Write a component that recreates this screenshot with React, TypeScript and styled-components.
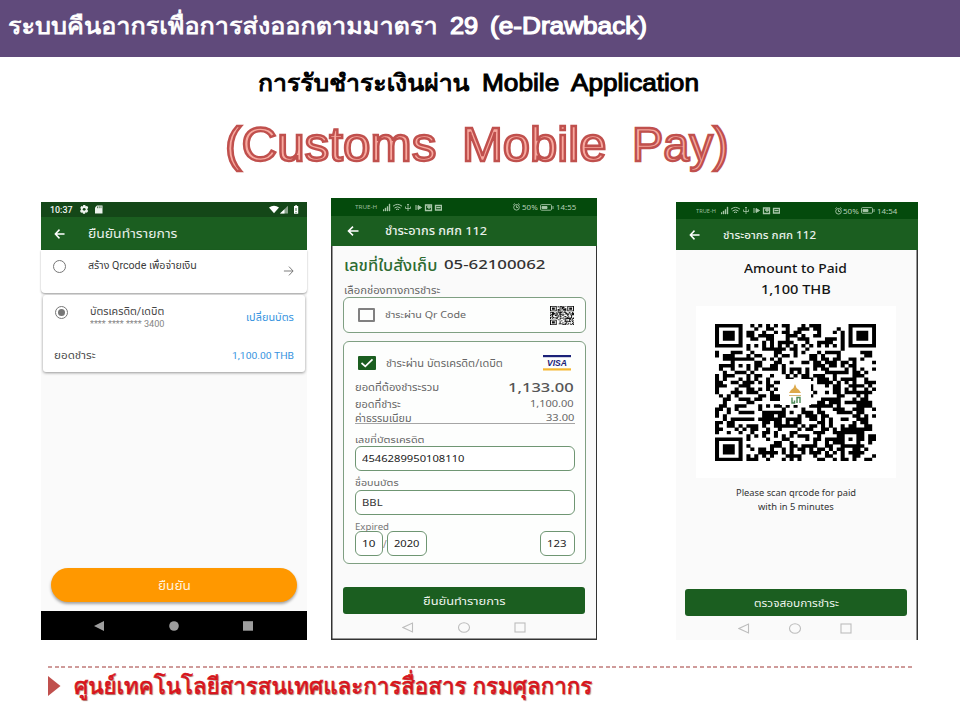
import React, { useLayoutEffect, useRef, useState } from "react";
import styled, { createGlobalStyle } from "styled-components";

const Global = createGlobalStyle`
  *, *::before, *::after { box-sizing: border-box; }
  body { margin: 0; background: #fff; }
  svg { display: block; flex: none; }
`;

const SANS = `"Liberation Sans", "Loma", "Garuda", "Noto Sans Thai", "Noto Sans", sans-serif`;
const APP = `"Noto Sans", "Noto Sans Thai", "Loma", sans-serif`;
const ROBOTO = `Roboto, "Noto Sans Thai", "Loma", sans-serif`;

/* ---------- text that keeps an exact measure ---------- */
interface LabelProps {
  w: number;
  size: number;
  color?: string;
  weight?: number;
  font?: string;
  drop?: number;
  stroke?: string;
  shadow?: string;
  children: React.ReactNode;
}
const Measure = styled.span<{ $w: number; $drop: number }>`
  display: block;
  flex: none;
  width: ${(p) => p.$w}px;
  height: 16px;
  white-space: pre;
  margin-top: ${(p) => p.$drop}px;
`;
const Glyphs = styled.span<{
  $size: number; $color: string; $weight: number; $font: string;
  $stroke?: string; $shadow?: string;
}>`
  display: block;
  width: max-content;
  transform-origin: 0 50%;
  font-family: ${(p) => p.$font};
  font-size: ${(p) => p.$size}px;
  font-weight: ${(p) => p.$weight};
  line-height: 16px;
  color: ${(p) => p.$color};
  -webkit-text-stroke: ${(p) => p.$stroke || "0"};
  text-shadow: ${(p) => p.$shadow || "none"};
`;
const Label = ({ w, size, color = "#555", weight = 400, font = APP, drop = 0, stroke, shadow, children }: LabelProps) => {
  const ref = useRef<HTMLSpanElement>(null);
  const [ratio, setRatio] = useState(1);
  useLayoutEffect(() => {
    if (ref.current) setRatio(w / ref.current.offsetWidth);
  }, [w, children]);
  return (
    <Measure $w={w} $drop={drop}>
      <Glyphs ref={ref} $size={size} $color={color} $weight={weight} $font={font} $stroke={stroke}
        $shadow={shadow} style={{ transform: `scaleX(${ratio})` }}>
        {children}
      </Glyphs>
    </Measure>
  );
};

/* ---------- slide ---------- */
const Slide = styled.main`
  width: 960px;
  height: 720px;
  background: #fff;
  overflow: hidden;
  display: flex;
  flex-direction: column;
`;
const Banner = styled.header`
  height: 57px;
  flex: none;
  background: #604a7b;
  padding: 18px 0 0 8px;
  display: flex;
  gap: 12px;
`;
const Headings = styled.section`
  height: 141px;
  flex: none;
  padding: 18px 0 0 225px;
`;
const Subtitle = styled.div`
  height: 62px;
  padding-left: 33px;
  display: flex;
  gap: 12px;
`;
const Title = styled.div`
  display: flex;
  gap: 26px;
`;
const Phones = styled.section`
  display: flex;
  align-items: flex-end;
  height: 442px;
  flex: none;
  padding-left: 41px;
`;
const Footer = styled.footer`
  margin: 26px 48px 0;
`;
const Dashes = styled.div`
  height: 1.5px;
  width: 864px;
  background: repeating-linear-gradient(90deg, #cf9b9a 0 4px, transparent 4px 6.72px);
`;
const FooterRow = styled.div`
  display: flex;
  padding-top: 8px;
  gap: 13px;
  align-items: flex-start;
`;

/* ---------- phone parts ---------- */
const Phone = styled.article<{ $w: number; $h: number; $ml?: number; $frame?: string }>`
  width: ${(p) => p.$w}px;
  height: ${(p) => p.$h}px;
  margin-left: ${(p) => p.$ml || 0}px;
  flex: none;
  background: #fafafa;
  display: flex;
  flex-direction: column;
  box-shadow: ${(p) => p.$frame || "none"};
`;
const StatusBar = styled.div<{ $h: number; $bg: string; $l: number; $r: number }>`
  height: ${(p) => p.$h}px;
  flex: none;
  background: ${(p) => p.$bg};
  padding: 0 ${(p) => p.$r}px 0 ${(p) => p.$l}px;
  display: flex;
  justify-content: space-between;
  align-items: center;
`;
const Cluster = styled.div<{ $gap: number }>`
  display: flex;
  align-items: center;
  gap: ${(p) => p.$gap}px;
`;
const AppBar = styled.div<{ $h: number; $l: number; $gap: number }>`
  height: ${(p) => p.$h}px;
  flex: none;
  background: #1b5e20;
  padding-left: ${(p) => p.$l}px;
  display: flex;
  align-items: center;
  gap: ${(p) => p.$gap}px;
`;
const Row = styled.div<{ $h: number; $l?: number; $r?: number; $gap?: number }>`
  display: flex;
  align-items: center;
  flex: none;
  height: ${(p) => p.$h}px;
  padding: 0 ${(p) => p.$r || 0}px 0 ${(p) => p.$l || 0}px;
  gap: ${(p) => p.$gap || 0}px;
`;
const Push = styled.div`
  margin-left: auto;
  display: flex;
`;
const OptionCard = styled.div`
  height: 43px;
  flex: none;
  background: #fff;
  border-radius: 0 0 4px 4px;
  box-shadow: 0 1px 2px rgba(0, 0, 0, 0.35);
  padding: 0 13px 0 12px;
  display: flex;
  gap: 22px;
`;
const PayCard = styled.div`
  height: 77px;
  flex: none;
  margin: 2px 2px 0;
  background: #fff;
  border-radius: 3px;
  box-shadow: 0 1px 3px rgba(0, 0, 0, 0.4);
`;
const Stack = styled.div<{ $pt?: number }>`
  padding-top: ${(p) => p.$pt || 0}px;
`;
const Ring = styled.div<{ $on?: boolean }>`
  width: 13px;
  height: 13px;
  flex: none;
  border-radius: 50%;
  border: 1.5px solid #777;
  background: ${(p) => (p.$on ? "#777" : "#fff")};
  background-clip: content-box;
  padding: 2px;
`;
const Pill = styled.div`
  width: 246px;
  height: 34px;
  margin: auto 0 9px 10px;
  flex: none;
  border-radius: 17px;
  background: #ff9800;
  box-shadow: 0 2px 3px rgba(0, 0, 0, 0.35);
  display: flex;
  align-items: center;
  justify-content: center;
`;
const BlackNav = styled.div`
  height: 29px;
  flex: none;
  background: #000;
  display: flex;
  align-items: center;
  padding-left: 53px;
`;
const Box = styled.div<{ $h: number }>`
  height: ${(p) => p.$h}px;
  width: 243px;
  margin-left: 12px;
  flex: none;
  border: 1px solid #7f9f82;
  border-radius: 6px;
  background: #fdfefd;
`;
const Check = styled.div`
  width: 17px;
  height: 14px;
  flex: none;
  border: 2px solid #808080;
  border-radius: 1px;
`;
const Rule = styled.div`
  height: 1px;
  width: 220px;
  margin-left: 11px;
  background: #a5a5a5;
`;
const Field = styled.div<{ $w: number }>`
  width: ${(p) => p.$w}px;
  height: 25px;
  flex: none;
  border: 1px solid #6f9673;
  border-radius: 6px;
  background: #fff;
  display: flex;
  align-items: center;
  padding-left: 6px;
`;
const FieldLine = styled.div`
  display: flex;
  margin-left: 11px;
  height: 25px;
`;
const Action = styled.div<{ $w: number; $l: number }>`
  width: ${(p) => p.$w}px;
  margin: auto 0 0 ${(p) => p.$l}px;
  height: 27px;
  flex: none;
  background: #1b5e20;
  border-radius: 3px;
  display: flex;
  align-items: center;
  justify-content: center;
`;
const Centered = styled.div<{ $h: number }>`
  height: ${(p) => p.$h}px;
  flex: none;
  display: flex;
  align-items: center;
  justify-content: center;
  padding-right: 3px;
`;
const QrPanel = styled.div`
  width: 200px;
  height: 172px;
  flex: none;
  margin: 6px 0 0 20px;
  background: #fff;
  padding: 18px 0 0 19px;
`;

/* ---------- drawings ---------- */
const buildQr = (n: number, seed: number): string => {
  let s = seed;
  const rand = () => {
    s = (s * 1664525 + 1013904223) % 4294967296;
    return s / 4294967296;
  };
  const finder = (x: number, y: number): boolean | null => {
    if (x < -1 || y < -1 || x > 7 || y > 7) return null;
    const d = Math.max(Math.abs(x - 3), Math.abs(y - 3));
    return d === 3 || d <= 1;
  };
  let d = "";
  for (let y = 0; y < n; y++)
    for (let x = 0; x < n; x++) {
      let on: boolean = rand() < 0.5;
      if (x === 6 || y === 6) on = (x + y) % 2 === 0;
      const a = Math.max(Math.abs(x - (n - 7)), Math.abs(y - (n - 7)));
      if (a <= 2) on = a !== 1;
      const f = finder(x, y) ?? finder(x - n + 7, y) ?? finder(x, y - n + 7);
      if (f !== null) on = f;
      if (on) d += `M${x} ${y}h1.03v1.03h-1.03z`;
    }
  return d;
};
const QR_BIG = buildQr(41, 77);
const QR_SMALL = buildQr(25, 5);

const Arrow = ({ w = 12, color = "#fff", flip = false, sw = 1.6 }: { w?: number; color?: string; flip?: boolean; sw?: number }) => (
  <svg width={w} height="10" viewBox="0 0 12 10" fill="none" stroke={color} strokeWidth={sw} preserveAspectRatio="none">
    <path d={flip ? "M1 5h10M6.5 .6 11 5 6.5 9.4" : "M11.5 5H1.5M6 .6 1.5 5 6 9.4"} />
  </svg>
);
const LeftIcons = () => (
  <svg width="59" height="9" viewBox="0 0 59 9" fill="none" stroke="#a9c7aa" strokeWidth="1">
    <path d="M0 8h1V6.500H0zM2 8h1V5H2zM4 8h1V3.500H4zM6 8h1V1H6z" fill="#a9c7aa" strokeWidth=".4" />
    <path d="M10 3.200q4.500-3.600 9 0M11.500 5q3-2.400 6 0M13 6.600q1.500-1.100 3 0" />
    <path d="M25 1v7M22.500 3.500v2h5v-2M24 2l1-1 1 1" strokeWidth=".8" />
    <path d="M33 2v5M35 2.500 38.500 4.500 35 6.500z" fill="#a9c7aa" />
    <path d="M42.500 2h6v5.500h-6zM44 4h4M46 2v4M52.500 2.500h6v4.500h-6zM53.500 4.700h4" strokeWidth="1.300" />
  </svg>
);
const Alarm = () => (
  <svg width="7" height="8" viewBox="0 0 7 8" fill="none" stroke="#a9c7aa" strokeWidth=".9">
    <circle cx="3.500" cy="4.300" r="2.800" /><path d="M3.500 2.500v2h1.500M.4 1.600 1.700.5M6.600 1.600 5.300.5" />
  </svg>
);
const Battery = () => (
  <svg width="14" height="7" viewBox="0 0 14 7" fill="none" stroke="#a9c7aa" strokeWidth=".9">
    <rect x=".5" y=".6" width="11" height="5.600" rx="1" /><path d="M2 2.500h5v2H2zM13 2v3" fill="#a9c7aa" />
  </svg>
);
const TinyStatus = ({ time, k = 1 }: { time: string; k?: number }) => (
  <>
    <Cluster $gap={5.5 * k}>
      <Label w={22 * k} size={6} color="#9dbd9e">TRUE-H</Label>
      <LeftIcons />
    </Cluster>
    <Cluster $gap={2 * k}>
      <Alarm />
      <Label w={16} size={7.500} color="#b5ceb6">50%</Label>
      <Battery />
      <Label w={20} size={7.500} color="#b5ceb6">{time}</Label>
    </Cluster>
  </>
);
const OutlineNav = ({ w, l, h }: { w: number; l: number; h: number }) => (
  <Row $h={h} $l={l}>
    <svg width={w} height="13" viewBox={`0 0 ${w} 13`} fill="none" stroke="#bdbdbd" strokeWidth="1.100">
      <path d="M10.500 2v9L1 6.500z" />
      <ellipse cx={w / 2} cy="6.500" rx="5.500" ry="4.700" />
      <rect x={w - 11} y="2" width="10" height="9" />
    </svg>
  </Row>
);

const Phone1 = () => (
  <Phone $w={266} $h={438}>
    <StatusBar $h={15} $bg="#144718" $l={9} $r={8}>
      <Cluster $gap={7}>
        <Label w={23} size={8.500} color="#f2f5f2" weight={500} font={ROBOTO}>10:37</Label>
        <svg width="23" height="9" viewBox="0 0 23 9" fill="#eef3ee">
          <path d="M3.300 0h2l.3 1.200 1.600-.3 1 1.700-1 1.900 1 1.600-1.300 1.600-1.300-.4-.6 1.400h-2l-.5-1.300-1.500.3-1-1.600 1.100-1.700L.3 2.800l1-1.700 1.500.3z" />
          <circle cx="4.200" cy="4.300" r="1.400" fill="#144718" />
          <path d="M17 .5h5.500v8h-7.500v-6z" /><path d="M17.500 1.500v1.700M19.200 1.200v2M21 1.200v2" stroke="#144718" strokeWidth=".7" />
        </svg>
      </Cluster>
      <svg width="30" height="9" viewBox="0 0 30 9" fill="#fff">
        <path d="M0 2.500Q5-1.200 10 2.500L5 8.300z" /><path d="M19 .8v7.700h-8z" opacity=".5" /><path d="M15.500 4.200v4.300H11z" />
        <path d="M25 1h1.200V.2h1.800V1h1.200v7.700H25z" /><path d="M27 3v3M27 7v1" stroke="#144718" strokeWidth=".8" />
      </svg>
    </StatusBar>
    <AppBar $h={33} $l={13} $gap={23}>
      <Arrow w={11} />
      <Label w={89} size={13} color="#e9f0e9" font={ROBOTO}>ยืนยันทำรายการ</Label>
    </AppBar>
    <OptionCard>
      <Stack $pt={10}><Ring /></Stack>
      <Stack $pt={8}><Label w={109} size={10} color="#3c3c3c" font={ROBOTO}>สร้าง Qrcode เพื่อจ่ายเงิน</Label></Stack>
      <Push><Stack $pt={16}><Arrow w={11} color="#777" flip sw={1} /></Stack></Push>
    </OptionCard>
    <PayCard>
      <Row $h={34} $l={12} $r={11} $gap={22}>
        <Stack><Ring $on /></Stack>
        <Stack $pt={11}>
          <Label w={74} size={10} color="#444" font={ROBOTO}>บัตรเครดิต/เดบิต</Label>
          <Label w={74} size={8.500} color="#858585" font={ROBOTO} drop={-4}>**** **** **** 3400</Label>
        </Stack>
        <Push><Label w={48} size={10} color="#3794e0" font={ROBOTO} drop={12}>เปลี่ยนบัตร</Label></Push>
      </Row>
      <Row $h={53} $l={11} $r={11}>
        <Label w={42} size={10} color="#4c4c4c" font={ROBOTO}>ยอดชำระ</Label>
        <Push><Label w={62} size={9.500} color="#3794e0" font={ROBOTO}>1,100.00 THB</Label></Push>
      </Row>
    </PayCard>
    <Pill><Label w={33} size={12} color="#fff2dc" font={ROBOTO} drop={1}>ยืนยัน</Label></Pill>
    <BlackNav>
      <svg width="160" height="12" viewBox="0 0 160 12" fill="#9e9e9e">
        <path d="M10 1v10L0 6z" /><circle cx="80" cy="6" r="4.800" /><rect x="149" y="1.200" width="10" height="9.500" />
      </svg>
    </BlackNav>
  </Phone>
);

const Phone2 = () => (
  <Phone $w={266} $h={442} $ml={24} $frame="inset 1.500px 0 #333, inset -1px -1.500px #333">
    <StatusBar $h={18} $bg="#044a0c" $l={24} $r={21}><TinyStatus time="14:55" /></StatusBar>
    <AppBar $h={30} $l={16} $gap={26}>
      <Arrow />
      <Label w={102} size={11.500} color="#e9f0e9" weight={500}>ชำระอากร กศก 112</Label>
    </AppBar>
    <Row $h={37} $l={13} $gap={7}>
      <Label w={93} size={15} color="#2c6b30" weight={500}>เลขที่ใบสั่งเก็บ</Label>
      <Label w={102} size={12.500} color="#333" weight={500} drop={1}>05-62100062</Label>
    </Row>
    <Row $h={14} $l={13}><Label w={96} size={10} color="#666">เลือกช่องทางการชำระ</Label></Row>
    <Box $h={36}>
      <Row $h={34} $l={14} $r={11} $gap={10}>
        <Check />
        <Label w={81} size={9.500} color="#666">ชำระผ่าน Qr Code</Label>
        <Push>
          <svg width="24" height="19" viewBox="0 0 25 25" preserveAspectRatio="none" fill="#111"><path d={QR_SMALL} /></svg>
        </Push>
      </Row>
    </Box>
    <Row $h={8} />
    <Box $h={223}>
      <Row $h={42} $l={14} $r={14} $gap={10}>
        <svg width="18" height="14" viewBox="0 0 18 14"><rect width="18" height="14" rx="1" fill="#1b5e20" /><path d="M3.500 7 7.300 10.300 14.500 3.300" fill="none" stroke="#fff" strokeWidth="1.700" /></svg>
        <Label w={117} size={10} color="#666">ชำระผ่าน บัตรเครดิต/เดบิต</Label>
        <Push>
          <svg width="28" height="16" viewBox="0 0 28 16">
            <path d="M0 0h28v2.200H0z" fill="#1b2178" /><path d="M0 13.300h28v2.200H0z" fill="#f5b72e" />
            <text x="4" y="11.300" fontFamily="Liberation Sans" fontStyle="italic" fontWeight="700" fontSize="9.500" textLength="20" lengthAdjust="spacingAndGlyphs" fill="#1b2178">VISA</text>
          </svg>
        </Push>
      </Row>
      <Row $h={6} $l={11} $r={11}>
        <Label w={84} size={10} color="#666">ยอดที่ต้องชำระรวม</Label>
        <Push><Label w={66} size={13} color="#555" weight={500}>1,133.00</Label></Push>
      </Row>
      <Row $h={28} $l={11} $r={11}>
        <Label w={46} size={10} color="#666">ยอดที่ชำระ</Label>
        <Push><Label w={44} size={9.500} color="#666">1,100.00</Label></Push>
      </Row>
      <Row $h={0} $l={11} $r={11}>
        <Label w={57} size={10} color="#666">ค่าธรรมเนียม</Label>
        <Push><Label w={28} size={9.500} color="#666">33.00</Label></Push>
      </Row>
      <Row $h={5} />
      <Rule />
      <Row $h={22} $l={11} ><Label w={70} size={9.500} drop={9} color="#666">เลขที่บัตรเครดิต</Label></Row>
      <FieldLine><Field $w={220}><Label w={102} size={9} color="#222">4546289950108110</Label></Field></FieldLine>
      <Row $h={19} $l={11}><Label w={44} size={9.500} drop={5} color="#666">ชื่อบนบัตร</Label></Row>
      <FieldLine><Field $w={220}><Label w={20} size={9} color="#333">BBL</Label></Field></FieldLine>
      <Row $h={16} $l={11}><Label w={34} size={8.500} color="#777" drop={7}>Expired</Label></Row>
      <FieldLine>
        <Field $w={28}><Label w={13} size={9} color="#222">10</Label></Field>
        <Row $h={25}><Label w={4} size={10} color="#888">/</Label></Row>
        <Field $w={40}><Label w={26} size={9} color="#222">2020</Label></Field>
        <Push><Row $h={25} $r={10}><Field $w={35}><Label w={19} size={9} color="#222">123</Label></Field></Row></Push>
      </FieldLine>
    </Box>
    <Action $w={242} $l={12}><Label w={83} size={11} color="#eef5ee">ยืนยันทำรายการ</Label></Action>
    <OutlineNav w={124} l={71} h={26} />
  </Phone>
);

const Phone3 = () => (
  <Phone $w={242} $h={438} $ml={79} $frame="inset -1.500px 0 #333">
    <StatusBar $h={17} $bg="#044a0c" $l={20} $r={21}><TinyStatus time="14:54" k={0.9} /></StatusBar>
    <AppBar $h={31} $l={13} $gap={23}>
      <Arrow w={11} />
      <Label w={93} size={11} color="#e9f0e9" weight={500}>ชำระอากร กศก 112</Label>
    </AppBar>
    <Row $h={8} />
    <Centered $h={21}><Label w={103} size={12.500} color="#151515" weight={500}>Amount to Paid</Label></Centered>
    <Centered $h={21}><Label w={70} size={12.500} color="#151515" weight={500}>1,100 THB</Label></Centered>
    <QrPanel>
      <svg width="161" height="137" viewBox="0 0 161 137">
        <g transform="scale(3.927 3.341)"><path d={QR_BIG} fill="#000" /></g>
        <rect x="65" y="55" width="31" height="26" fill="#fff" />
        <path d="M80 60l1.500 4 2.500 2 2 3h-12l2-3 2.500-2z" fill="#dda94b" />
        <path d="M74 71.500h12" stroke="#d6b779" strokeWidth="1" />
        <path d="M77 73.500v5.500h2.500v-2.500M82 79v-5.500h3V79" fill="none" stroke="#4c8a56" strokeWidth="1.400" />
      </svg>
    </QrPanel>
    <Row $h={8} />
    <Centered $h={14}><Label w={120} size={9} color="#333">Please scan qrcode for paid</Label></Centered>
    <Centered $h={14}><Label w={76} size={9} color="#333">with in 5 minutes</Label></Centered>
    <Action $w={222} $l={9}><Label w={85} size={11} color="#eef5ee">ตรวจสอบการชำระ</Label></Action>
    <OutlineNav w={114} l={62} h={24} />
  </Phone>
);

export default function App() {
  const banner = { size: 23.5, color: "#fff", font: SANS, stroke: "1.2px #fff" };
  const sub = { size: 23.5, color: "#000", font: SANS, stroke: "1px #000" };
  const title = { size: 48, color: "#f8aaa0", font: SANS, stroke: "2.4px #c0504d" };
  return (
    <Slide>
      <Global />
      <Banner>
        <Label w={430} {...banner} stroke=".8px #fff">ระบบคืนอากรเพื่อการส่งออกตามมาตรา</Label>
        <Label w={28} {...banner}>29</Label>
        <Label w={157} {...banner}>(e-Drawback)</Label>
      </Banner>
      <Headings>
        <Subtitle>
          <Label w={212} {...sub}>การรับชำระเงินผ่าน</Label>
          <Label w={77} {...sub}>Mobile</Label>
          <Label w={128} {...sub}>Application</Label>
        </Subtitle>
        <Title>
          <Label w={211} {...title}>(Customs</Label>
          <Label w={144} {...title}>Mobile</Label>
          <Label w={97} {...title}>Pay)</Label>
        </Title>
      </Headings>
      <Phones>
        <Phone1 />
        <Phone2 />
        <Phone3 />
      </Phones>
      <Footer>
        <Dashes />
        <FooterRow>
          <svg width="13" height="20" viewBox="0 0 13 20"><path d="M0 0 12.500 10 0 20z" fill="#c0504d" /></svg>
          <Label w={518} size={23} color="#d8141c" font={SANS} stroke=".7px #d8141c" drop={2} shadow="1px 1px 1px rgba(90,50,30,.6)">ศูนย์เทคโนโลยีสารสนเทศและการสื่อสาร กรมศุลกากร</Label>
        </FooterRow>
      </Footer>
    </Slide>
  );
}
